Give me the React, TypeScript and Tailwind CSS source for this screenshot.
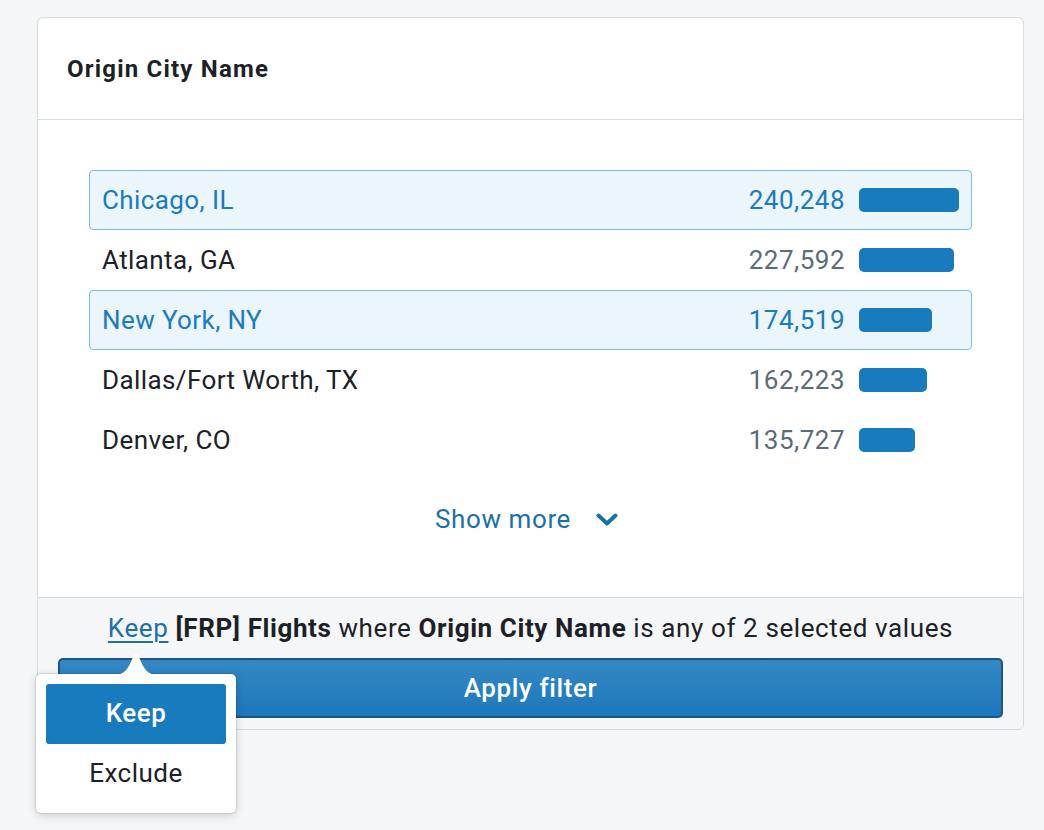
import React from "react";

const rows = [
  { name: "Chicago, IL", value: 240248, selected: true },
  { name: "Atlanta, GA", value: 227592, selected: false },
  { name: "New York, NY", value: 174519, selected: true },
  { name: "Dallas/Fort Worth, TX", value: 162223, selected: false },
  { name: "Denver, CO", value: 135727, selected: false },
];

const max = 240248;

export default function App() {
  return (
    <div
      className="relative w-[1044px] h-[830px] bg-[#f5f6f8] pl-[37px] pt-[17px]"
      style={{ fontFamily: "Roboto, 'Noto Sans', sans-serif" }}
    >
      <div className="w-[987px] h-[713px] bg-white border border-[#d6d9dd] rounded-[6px] flex flex-col overflow-hidden">
        <div className="h-[102px] shrink-0 border-b border-[#d6d9dd] flex items-center px-[29px]">
          <span className="text-[24px] font-bold tracking-[1.2px] text-[#1c2127]">Origin City Name</span>
        </div>
        <div className="flex-1 flex flex-col px-[51px] pt-[50px]">
          {rows.map((r) => (
            <div
              key={r.name}
              className={
                "h-[60px] flex items-center pl-[12px] pr-[12px] rounded-[4px] border " +
                (r.selected
                  ? "bg-[#ebf5fc] border-[#7dbbe6] text-[#1b7bbd]"
                  : "border-transparent text-[#1c2127]")
              }
            >
              <span className="flex-1 text-[26px] tracking-[0.4px]">{r.name}</span>
              <span
                className={
                  "text-[26px] tracking-[0.5px] " + (r.selected ? "text-[#1b7bbd]" : "text-[#5d6a7a]")
                }
              >
                {r.value.toLocaleString("en-US")}
              </span>
              <div className="w-[100px] ml-[14px] flex">
                <div
                  className="h-[24px] rounded-[5px] bg-[#177bbd]"
                  style={{ width: Math.round((r.value / max) * 100) + "px" }}
                />
              </div>
            </div>
          ))}
          <div className="flex items-center justify-center gap-[25px] mt-[30px] ml-[-8px] text-[#1d6fa8]">
            <span className="text-[26px] tracking-[0.6px]">Show more</span>
            <svg width="22" height="14" viewBox="0 0 22 14">
              <path d="M2.5 2.5 L11 10.5 L19.5 2.5" fill="none" stroke="#1d6fa8" strokeWidth="4" strokeLinecap="round" strokeLinejoin="round" />
            </svg>
          </div>
        </div>
        <div className="h-[132px] shrink-0 border-t border-[#d6d9dd] bg-[#f5f6f8] flex flex-col px-[20px]">
          <div className="h-[60px] flex items-center justify-center text-[26px] tracking-[0.6px] text-[#1c2127] whitespace-nowrap">
            <span className="text-[#1d6fa8] underline underline-offset-[4px] decoration-[2px]">Keep</span>
            <span className="font-bold">&nbsp;[FRP] Flights</span>
            <span>&nbsp;where&nbsp;</span>
            <span className="font-bold">Origin City Name</span>
            <span>&nbsp;is any of 2 selected values</span>
          </div>
          <button className="h-[60px] w-full rounded-[5px] border-2 border-[#1f557e] bg-gradient-to-b from-[#3488c4] to-[#1b78bb] text-white text-[26px] tracking-[0.6px] font-medium">
            Apply filter
          </button>
        </div>
      </div>

      <div className="absolute left-[36px] top-[674px] w-[200px] h-[139px] bg-white rounded-[5px] shadow-[0_2px_10px_rgba(0,0,0,0.18),0_0_0_1px_rgba(0,0,0,0.08)] p-[10px] flex flex-col">
        <svg className="absolute left-[76px] top-[-22px]" width="48" height="23" viewBox="0 0 48 23">
          <path d="M0 23 C10 23 14 20 18 12 L21 5 C22.5 1.5 25.5 1.5 27 5 L30 12 C34 20 38 23 48 23 Z" fill="#ffffff" />
        </svg>
        <div className="h-[60px] rounded-[3px] bg-[#187bbd] text-white text-[26px] tracking-[0.5px] font-medium flex items-center justify-center">
          Keep
        </div>
        <div className="h-[60px] flex items-center justify-center text-[26px] tracking-[0.5px] text-[#1c2127]">Exclude</div>
      </div>
    </div>
  );
}
